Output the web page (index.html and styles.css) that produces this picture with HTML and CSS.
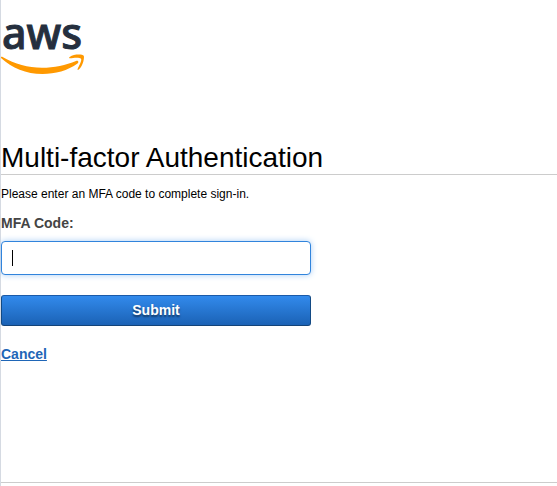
FILE: index.html
```html
<!DOCTYPE html>
<html lang="en">
<head>
<meta charset="utf-8">
<meta name="viewport" content="width=device-width, initial-scale=1">
<title>Multi-factor Authentication</title>
<link rel="stylesheet" href="styles.css">
</head>
<body>
<div class="page">
  <header class="header">
    <svg class="logo" width="96" height="75" viewBox="0 -21 96 75" role="img" aria-label="aws">
      <text class="logo-word" x="1" y="28">aws</text>
      <path class="logo-smile" d="M0 37C-.6 36.300.3 35.400 1.600 36C14 43 27 46.800 41 46.800C53 46.800 65 44 75 40C77 39.200 78.300 41 76.500 42.500C67 49.500 54 53 41.500 53C25 53 11 47 0 37Z"/>
      <path class="logo-smile" d="M80 37.800C78.500 36 72.500 36.800 69 37.300C68 37.400 67.800 36.600 68.600 36C73.500 32.600 81.800 33.500 82.700 34.700C83.600 35.900 82.400 44.600 77.700 48.600C77 49.200 76.200 48.900 76.600 48C77.700 45.300 81.200 39.500 80 37.800Z"/>
    </svg>
  </header>
  <main class="content">
    <h1 class="title">Multi-factor Authentication</h1>
    <p class="intro">Please enter an MFA code to complete sign-in.</p>
    <form class="form">
      <label class="label" for="mfa">MFA Code:</label>
      <input class="field" id="mfa" type="text" autocomplete="one-time-code">
      <button class="submit" type="submit">Submit</button>
    </form>
    <a class="cancel" href="#">Cancel</a>
  </main>
  <footer class="footer"></footer>
</div>
</body>
</html>
```
FILE: styles.css
```css
* { box-sizing: border-box; }

body {
  margin: 0;
  background: #fff;
  color: #000;
  font: 12px/16px "Liberation Sans", Arial, sans-serif;
}

.page {
  display: flex;
  flex-direction: column;
  min-height: 100vh;
  border-left: 1px solid #d5dae2;
}

.header { padding-bottom: 67px; }

.logo { display: block; }

.logo-word {
  font-family: "Noto Sans", sans-serif;
  font-size: 43px;
  font-weight: 500;
  fill: #252f3e;
  stroke: #252f3e;
  stroke-width: 1px;
}

.logo-smile { fill: #f90; }

.content { flex: 1; }

.title {
  margin: 0;
  border-bottom: 1px solid #ccc;
  font-size: 28px;
  line-height: 32px;
  font-weight: 400;
}

.intro { margin: 11px 0 13px; }

.form {
  display: flex;
  flex-direction: column;
  max-width: 310px;
}

.label {
  margin-bottom: 10px;
  color: #444;
  font-size: 14px;
  font-weight: 700;
}

.field {
  height: 34px;
  margin-bottom: 20px;
  padding: 0 10px;
  border: 1px solid #3184dc;
  border-radius: 4px;
  outline: none;
  /* text cursor at the start of the empty field */
  background: linear-gradient(#000, #000) 10px center / 1px 16px no-repeat #fff;
  caret-color: transparent;
  box-shadow: 0 0 6px #a9cdf5;
  font: inherit;
  font-size: 14px;
}

.submit {
  height: 31px;
  padding: 0 0 2px;
  border: 1px solid;
  border-color: #1b5aa8 #134a84 #134378;
  border-radius: 3px;
  background: linear-gradient(#328aec, #1b62b5);
  color: #fff;
  font: inherit;
  font-size: 14px;
  font-weight: 700;
  text-shadow: 0 2px 2px rgba(0, 0, 0, .5);
}

.cancel {
  display: inline-block;
  margin-top: 20px;
  color: #1f66b7;
  font-size: 14px;
  font-weight: 700;
}

.footer {
  height: 4px;
  border-top: 1px solid #ccc;
}
```
